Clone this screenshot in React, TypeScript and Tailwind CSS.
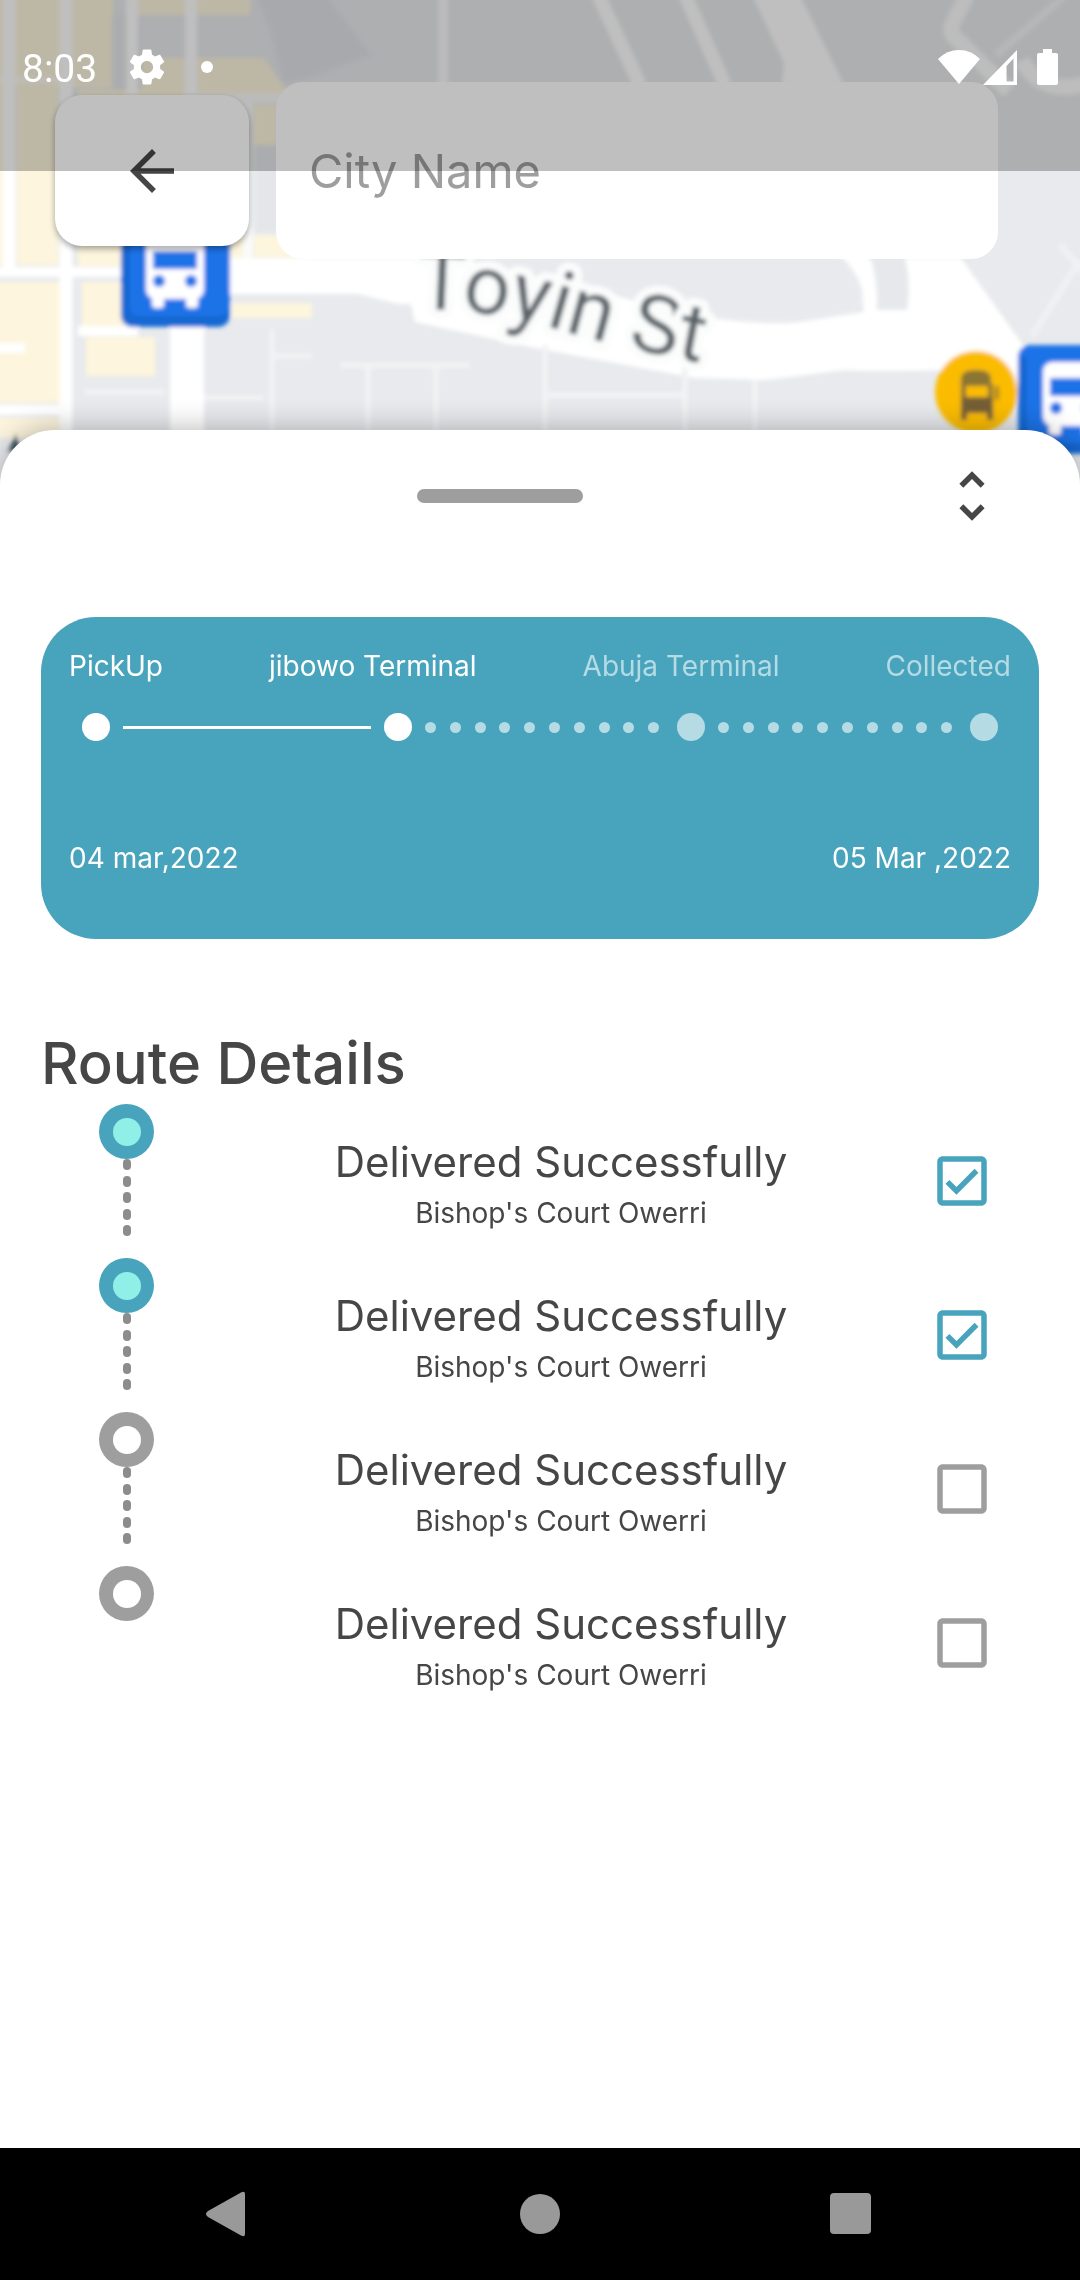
import { useState } from "react";

const stops = [
  { title: "Delivered Successfully", place: "Bishop's Court Owerri", done: true },
  { title: "Delivered Successfully", place: "Bishop's Court Owerri", done: true },
  { title: "Delivered Successfully", place: "Bishop's Court Owerri", done: false },
  { title: "Delivered Successfully", place: "Bishop's Court Owerri", done: false },
];

function BusMarker({ x, y }: { x: number; y: number }) {
  return (
    <g transform={`translate(${x} ${y})`}>
      <rect width="109" height="109" rx="12" fill="#1a73e8" />
      <path d="M1 12v85q0 11 11 11h85q11 0 11-11v-7q-2 8-11 8H18q-9 0-9-9V12z" fill="#1967d2" />
      <rect x="25" y="17" width="58" height="64" rx="9" fill="#fff" />
      <rect x="31" y="76" width="12" height="14" rx="3" fill="#fff" />
      <rect x="65" y="76" width="12" height="14" rx="3" fill="#fff" />
      <rect x="32" y="33" width="44" height="18" fill="#1a73e8" />
      <circle cx="38" cy="63" r="6" fill="#1a73e8" />
      <circle cx="70" cy="63" r="6" fill="#1a73e8" />
    </g>
  );
}

function StreetMap() {
  return (
    <svg
      className="absolute inset-x-0 top-0 h-[500px] w-full"
      viewBox="0 0 1080 500"
      preserveAspectRatio="xMidYMin slice"
      role="img"
      aria-label="Map around Toyin St"
    >
      <defs>
        <filter id="soft" x="-5%" y="-5%" width="110%" height="110%">
          <feGaussianBlur stdDeviation="2" />
        </filter>
        <path id="toyin" d="M416 309Q490 309 560 330T736 369" />
      </defs>
      <rect width="1080" height="500" fill="#e8eaed" />
      <g filter="url(#soft)">
        <path d="M256-5h70l45 60-60 22-28 6-12-50z" fill="#e0e2e6" />
        <path
          d="M-5-5h118v18H78h35v75H-5zM138-5h112v20H138zM140 58h124l24 35H140zM17 84h41v181H17zM-5 84H5v181H-5zM78 90h168v176H78zM254 105h24v40h-24zM254 235h60v22h-60zM-5 282h68v121H-5zM82 282h50v44H82zM86 337h69v39H86zM-5 418h67v20H-5zM232 303h80v15h-80z"
          fill="#fdf5dd"
        />
        <path d="M112 15h30v75h-30zM254 145h26v87h-26z" fill="#e4e6ea" />
        <g fill="none" stroke="#fff">
          <path d="M9-5v275M66-5v445" strokeWidth="13" />
          <path d="M191-5v100M132-5v100" strokeWidth="12" />
          <path d="M185 98h100M248 98v165M443-5v90" strokeWidth="10" stroke="#fafafa" />
          <path d="M-5 272h130M78 331h60M-5 348h30M-5 410h72" strokeWidth="10" />
          <path d="M-5 80h80" strokeWidth="6" opacity=".7" />
          <path d="M187 320v120" strokeWidth="34" />
          <path d="M598-5l42 90M685-5l40 90" strokeWidth="14" />
          <path d="M967-5l-14 28q-6 10 6 18l50 50M1022 60q18 36 64 24" strokeWidth="16" opacity=".85" />
          <path d="M1066-5l-70 60" strokeWidth="8" opacity=".5" />
          <path d="M846 250q26 14 28 66" strokeWidth="20" />
          <path d="M1080 260l-48 76M1060 245l26 30" strokeWidth="7" opacity=".35" />
        </g>
        <path d="M752-5h48l44 90h-62l2-22z" fill="#fff" />
        <path
          d="M200 258h234v46h-36l-40-10H200zM400 258h50l260 60q60 8 90 4l64-10q16-4 12-24l-5-30h90l64 90-10 50-70-28q-70 2-100 0l-80 10-70-2-160-30-120-26z"
          fill="#fff"
        />
        <path d="M868 250q10 26 9 60l30 0q5-30-4-60z" fill="#e6e8eb" />
        <path d="M457 250h378q32 30 27 53-4 12-22 12l-60 8q-70-2-100-14l-130-32z" fill="#e8eaed" />
        <g fill="none" stroke="#f1f2f3" strokeWidth="6">
          <path d="M272 330v110M368 365v75M436 365v75M340 365h130M204 398h60M272 356h40M85 392h80M545 345v95M685 365v75M545 395h138M755 380v60" />
        </g>
        <circle cx="976" cy="392" r="41" fill="#fbbc04" />
        <path d="M961 386v-7q0-9 15-9t15 9v7z" fill="#8b7430" />
        <path d="M961 384h5v14h-5zM988 384h5v14h-5z" fill="#8b7430" />
        <path d="M961 397h32v23h-6v-7h-20v7h-6z" fill="#756035" />
        <path d="M995 386h4v14h-4z" fill="#a17f20" />
        <path d="M8 452l8-18 4 16z" fill="#3c5560" />
        <BusMarker x={121} y={218} />
        <BusMarker x={1018} y={345} />
      </g>
      <text
        className="font-['Roboto']"
        fontSize="82"
        fill="#596267"
        stroke="#fbfcfc"
        strokeWidth="18"
        strokeLinejoin="round"
        paintOrder="stroke"
        filter="url(#soft)"
      >
        <textPath href="#toyin">Toyin St</textPath>
      </text>
    </svg>
  );
}

function StatusBar() {
  return (
    <div className="pointer-events-none absolute inset-x-0 top-0 z-20 flex h-[171px] items-start justify-between bg-black/25 px-[22px] pt-[44px] text-white">
      <div className="flex h-[46px] items-center">
        <span className="w-[100px] pt-1 font-['Roboto',sans-serif] text-[39px] leading-[46px]">8:03</span>
        <svg className="ml-1 size-[42px]" viewBox="0 0 24 24" fill="currentColor" aria-hidden="true">
          <path d="M19.43 12.98c.04-.32.07-.64.07-.98s-.03-.66-.07-.98l2.11-1.65c.19-.15.24-.42.12-.64l-2-3.46c-.12-.22-.39-.3-.61-.22l-2.49 1c-.52-.4-1.08-.73-1.69-.98l-.38-2.65C14.46 2.18 14.25 2 14 2h-4c-.25 0-.46.18-.49.42l-.38 2.65c-.61.25-1.17.59-1.69.98l-2.49-1c-.23-.09-.49 0-.61.22l-2 3.46c-.13.22-.07.49.12.64l2.11 1.65c-.04.32-.07.65-.07.98s.03.66.07.98l-2.11 1.65c-.19.15-.24.42-.12.64l2 3.46c.12.22.39.3.61.22l2.49-1c.52.4 1.08.73 1.69.98l.38 2.65c.03.24.24.42.49.42h4c.25 0 .46-.18.49-.42l.38-2.65c.61-.25 1.17-.59 1.69-.98l2.49 1c.23.09.49 0 .61-.22l2-3.46c.12-.22.07-.49-.12-.64l-2.11-1.65zM12 15.5c-1.93 0-3.5-1.57-3.5-3.5s1.57-3.5 3.5-3.5 3.5 1.57 3.5 3.5-1.57 3.5-3.5 3.5z" />
        </svg>
        <span className="ml-[33px] size-3 rounded-full bg-white" />
      </div>
      <div className="flex h-[46px] items-center">
        <svg className="h-[36px] w-[42px]" viewBox="0 0 42 36" fill="currentColor" aria-hidden="true">
          <path d="M21 35L0 10Q9 1 21 1T42 10z" />
        </svg>
        <svg className="ml-[3px] h-[36px] w-[34px]" viewBox="0 0 34 36" fill="currentColor" aria-hidden="true">
          <path fillRule="evenodd" d="M0 36L34 1v35zM23.500 17v15.500h7V9.500z" />
        </svg>
        <svg className="ml-[20px] h-[36px] w-[21px]" viewBox="0 0 21 36" fill="currentColor" aria-hidden="true">
          <path d="M6 0h9v4h4q2 0 2 2v28q0 2-2 2H2q-2 0-2-2V6q0-2 2-2h4z" />
        </svg>
      </div>
    </div>
  );
}

function Node({ faded = false }: { faded?: boolean }) {
  return <span className={`size-7 shrink-0 rounded-full ${faded ? "bg-[#b5dbe4]" : "bg-white"}`} />;
}

function DottedTrack() {
  return (
    <div className="mr-1 ml-[13px] grid flex-1 grid-cols-10">
      {Array.from({ length: 10 }, (_, i) => (
        <span key={i} className="size-[11px] rounded-full bg-[#b5dbe4]" />
      ))}
    </div>
  );
}

function ProgressCard() {
  return (
    <section
      aria-label="Delivery progress"
      className="rounded-[55px] bg-[#48a4bc] px-[28px] pt-[29px] pb-[61px] text-[28px] leading-[40px] text-white"
    >
      <div className="flex justify-between">
        <span>PickUp</span>
        <span>jibowo Terminal</span>
        <span className="text-[#b5dbe4]">Abuja Terminal</span>
        <span className="text-[#b5dbe4]">Collected</span>
      </div>
      <div className="mt-[27px] flex items-center px-[13px]">
        <Node />
        <span className="mx-[13px] h-[3px] flex-1 bg-white" />
        <Node />
        <DottedTrack />
        <Node faded />
        <DottedTrack />
        <Node faded />
      </div>
      <div className="mt-[97px] flex justify-between">
        <span>04 mar,2022</span>
        <span>05 Mar ,2022</span>
      </div>
    </section>
  );
}

function RouteList() {
  const [done, setDone] = useState(stops.map((s) => s.done));
  return (
    <ul>
      {stops.map((stop, i) => (
        <li key={i} className="flex h-[154px] items-start pr-[44px] pl-[58px]">
          <div className="flex w-[55px] flex-col items-center">
            <span
              className={`flex size-[55px] items-center justify-center rounded-full ${
                stop.done ? "bg-[#48a4bc]" : "bg-[#9e9e9e]"
              }`}
            >
              <span className={`size-7 rounded-full ${stop.done ? "bg-[#90f0e8]" : "bg-white"}`} />
            </span>
            {i < stops.length - 1 && (
              <span className="flex h-[77px] flex-col justify-between">
                {Array.from({ length: 5 }, (_, d) => (
                  <span key={d} className="h-[11px] w-2 rounded-full bg-[#8c8c8c]" />
                ))}
              </span>
            )}
          </div>
          <div className="flex-1 pt-[27px] pl-[39px] text-center">
            <h3 className="text-[42px] leading-[62px]">{stop.title}</h3>
            <p className="text-[28px] leading-[40px]">{stop.place}</p>
          </div>
          <span className="relative mt-[44px] block size-[66px]">
            <input
              type="checkbox"
              aria-label={`Stop ${i + 1} delivered`}
              checked={done[i]}
              onChange={() => setDone(done.map((v, j) => (j === i ? !v : v)))}
              className="peer absolute inset-0 size-full cursor-pointer appearance-none"
            />
            <svg
              viewBox="0 0 24 24"
              fill="currentColor"
              aria-hidden="true"
              className="pointer-events-none size-full text-[#9e9e9e] peer-checked:text-[#48a4bc] [&>.tick]:hidden peer-checked:[&>.tick]:block"
            >
              <path d="M19 3H5c-1.1 0-2 .9-2 2v14c0 1.1.9 2 2 2h14c1.1 0 2-.9 2-2V5c0-1.1-.9-2-2-2zm0 16H5V5h14v14z" />
              <path className="tick" d="M17.99 9l-1.41-1.42-6.59 6.59-2.58-2.57-1.42 1.41 4 3.99z" />
            </svg>
          </span>
        </li>
      ))}
    </ul>
  );
}

export default function App() {
  return (
    <div className="relative flex min-h-screen flex-col overflow-hidden bg-white font-['Inter',sans-serif] text-[#464646]">
      <StreetMap />
      <StatusBar />
      <header className="relative flex items-center gap-[27px] pt-[82px] pr-[82px] pb-[171px] pl-[55px]">
        <button
          type="button"
          aria-label="Back"
          className="flex h-[151px] w-[194px] items-center justify-center rounded-[27px] bg-white shadow-[0_3px_6px_rgba(0,0,0,0.35)]"
        >
          <svg className="size-[66px]" viewBox="0 0 24 24" fill="currentColor" aria-hidden="true">
            <path d="M20 11H7.83l5.59-5.59L12 4l-8 8 8 8 1.41-1.41L7.83 13H20v-2z" />
          </svg>
        </button>
        <input
          type="text"
          aria-label="City Name"
          placeholder="City Name"
          className="h-[177px] min-w-0 flex-1 rounded-[27px] bg-white px-[33px] text-[47px] outline-none placeholder:text-[#9e9e9e]"
        />
      </header>

      <main className="relative flex-1 rounded-t-[55px] bg-white px-[41px] shadow-[0_0_30px_rgba(0,0,0,0.3)]">
        <div className="flex items-center pt-[33px] pr-[34px] pl-[20px]">
          <div className="flex flex-1 justify-center">
            <span className="h-[14px] w-[166px] rounded-full bg-[#9e9e9e]" />
          </div>
          <button type="button" aria-label="Expand or collapse panel">
            <svg className="size-[66px]" viewBox="0 0 24 24" fill="currentColor" aria-hidden="true">
              <path d="M12 5.83L15.17 9l1.41-1.41L12 3 7.41 7.59 8.83 9 12 5.83zm0 12.34L8.83 15l-1.41 1.41L12 21l4.59-4.59L15.17 15 12 18.17z" />
            </svg>
          </button>
        </div>
        <div className="mt-[88px]">
          <ProgressCard />
        </div>
        <h2 className="mt-[83px] text-[58px] leading-[82px] font-medium">Route Details</h2>
        <RouteList />
      </main>

      <nav aria-label="System" className="relative flex h-[132px] items-center justify-between bg-black px-[192px] text-[#999]">
        <button type="button" aria-label="System back">
          <svg className="size-[66px]" viewBox="0 0 66 66" fill="currentColor" aria-hidden="true">
            <path d="M16 30L49 11.500Q53 9.500 53 13v40q0 3.500-4 1.500L16 36q-4-3 0-6z" />
          </svg>
        </button>
        <button type="button" aria-label="Home">
          <svg className="size-[66px]" viewBox="0 0 66 66" fill="currentColor" aria-hidden="true">
            <circle cx="33" cy="33" r="20" />
          </svg>
        </button>
        <button type="button" aria-label="Recent apps">
          <svg className="size-[66px]" viewBox="0 0 66 66" fill="currentColor" aria-hidden="true">
            <rect x="8" y="12" width="41" height="41" rx="4" />
          </svg>
        </button>
      </nav>
    </div>
  );
}
